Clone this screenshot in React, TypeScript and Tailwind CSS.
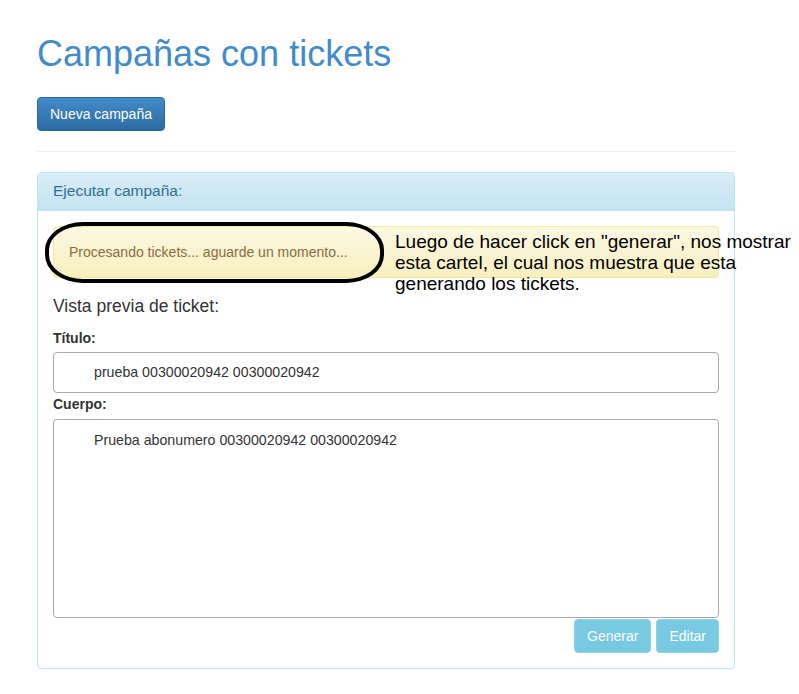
import React from "react";

export default function App() {
  const font = { fontFamily: '"Liberation Sans", Arial, sans-serif' };
  return (
    <div className="relative min-h-[694px] w-[799px] bg-white" style={font}>
      <div className="ml-[37px] w-[698px] pt-[34px]">
        <h1 className="text-[36px] leading-[40px] text-[#428bca]">Campañas con tickets</h1>
        <button className="mt-[23px] h-[34px] rounded-[4px] border border-[#2b669a] bg-gradient-to-b from-[#428bca] to-[#2d6ca2] px-[12px] text-[14px] leading-[20px] text-white">
          Nueva campaña
        </button>
        <div className="mt-[20px] h-px bg-[#eeeeee]" />
        <div className="mt-[20px] rounded-[4px] border border-[#bce8f1]">
          <div className="h-[38px] rounded-t-[3px] border-b border-[#bce8f1] bg-gradient-to-b from-[#d9edf7] to-[#c4e3f3] px-[15px] pt-[9px] text-[15.5px] leading-[18px] text-[#31708f]">
            Ejecutar campaña:
          </div>
          <div className="px-[15px] pb-[15px] pt-[15px]">
            <div className="h-[52px] rounded-[4px] border border-[#f5e79e] bg-gradient-to-b from-[#fcf8e3] to-[#f8efc0] px-[15px] py-[15px] text-[14px] leading-[20px] text-[#8a6d3b]">
              Procesando tickets... aguarde un momento...
            </div>
            <div className="mt-[18px] text-[17.5px] leading-[20px] text-[#333333]">Vista previa de ticket:</div>
            <div className="mt-[13px] text-[14px] font-bold leading-[18px] text-[#333333]">Título:</div>
            <div className="mt-[5px] flex h-[41px] items-center rounded-[4px] border border-[#a9a9a9] pl-[40px] text-[14.2px] text-[#333333]">
              prueba 00300020942 00300020942
            </div>
            <div className="mt-[2px] text-[14px] font-bold leading-[18px] text-[#333333]">Cuerpo:</div>
            <div className="mt-[6px] h-[199px] rounded-[4px] border border-[#a9a9a9] pl-[40px] pt-[10px] text-[14.2px] leading-[20px] text-[#333333]">
              Prueba abonumero 00300020942 00300020942
            </div>
            <div className="mt-px flex justify-end gap-[5px]">
              <button className="h-[34px] rounded-[4px] border border-[#8fd3e8] bg-[#78c9e2] px-[12px] text-[14px] leading-[20px] text-white">
                Generar
              </button>
              <button className="h-[34px] rounded-[4px] border border-[#8fd3e8] bg-[#78c9e2] px-[12px] text-[14px] leading-[20px] text-white">
                Editar
              </button>
            </div>
          </div>
        </div>
      </div>
      <div className="absolute left-[45px] top-[222px] h-[61px] w-[339px] rounded-[38px/28px] border-[4px] border-black" />
      <div className="absolute left-[395px] top-[231px] whitespace-nowrap text-[19px] leading-[21px] text-black">
        Luego de hacer click en "generar", nos mostrar
        <br />
        esta cartel, el cual nos muestra que esta
        <br />
        generando los tickets.
      </div>
    </div>
  );
}
